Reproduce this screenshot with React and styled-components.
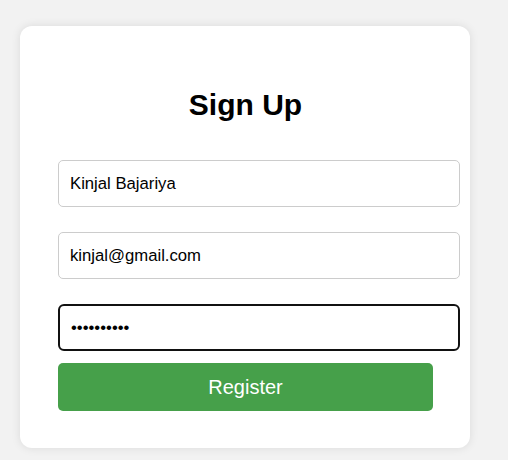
import React from "react";
import styled, { createGlobalStyle } from "styled-components";

const GlobalStyle = createGlobalStyle`
  body {
    margin: 0;
    background: #f2f2f2;
    font-family: "Liberation Sans", Arial, sans-serif;
  }
`;

const Page = styled.div`
  padding: 26px 0 0 20px;
  min-height: 460px;
  box-sizing: border-box;
`;

const Card = styled.form`
  width: 450px;
  box-sizing: border-box;
  padding: 54px 10px 37px 38px;
  background: #fff;
  border-radius: 12px;
  box-shadow: 0 0 10px rgba(0, 0, 0, 0.1);
`;

const Title = styled.h2`
  margin: 0 0 30px;
  width: 375px;
  text-align: center;
  font-size: 30px;
  font-weight: bold;
  line-height: 50px;
  color: #000;
`;

const Input = styled.input`
  display: block;
  width: 402px;
  height: 47px;
  box-sizing: border-box;
  margin: 0 0 ${(p) => (p.$last ? "12px" : "25px")};
  padding: 0 11px;
  font-family: "Liberation Sans", Arial, sans-serif;
  font-size: 16.7px;
  color: #000;
  background: #fff;
  border: ${(p) => (p.$focus ? "2px solid #111" : "1px solid #ccc")};
  border-radius: ${(p) => (p.$focus ? "6px" : "5px")};
  outline: none;
`;

const Button = styled.button`
  display: block;
  width: 375px;
  height: 48px;
  border: none;
  border-radius: 5px;
  background: #46a04a;
  color: #fff;
  font-family: "Liberation Sans", Arial, sans-serif;
  font-size: 20px;
  cursor: pointer;
`;

export default function App() {
  return (
    <>
      <GlobalStyle />
      <Page>
        <Card onSubmit={(e) => e.preventDefault()}>
          <Title>Sign Up</Title>
          <Input type="text" defaultValue="Kinjal Bajariya" />
          <Input type="email" defaultValue="kinjal@gmail.com" />
          <Input type="password" defaultValue="kinjal1234" $focus $last autoFocus />
          <Button type="submit">Register</Button>
        </Card>
      </Page>
    </>
  );
}
